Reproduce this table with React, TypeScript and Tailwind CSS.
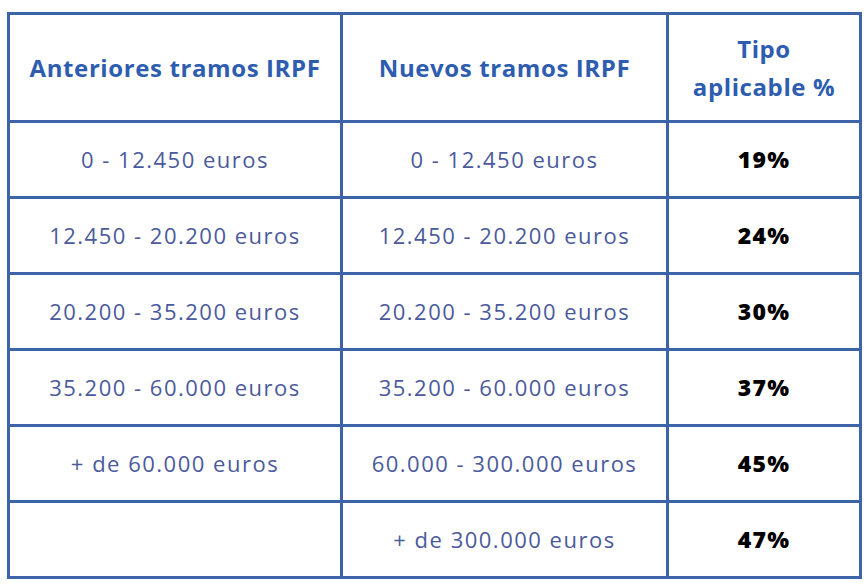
const rows = [
  { before: '0 - 12.450 euros', after: '0 - 12.450 euros', rate: '19%' },
  { before: '12.450 - 20.200 euros', after: '12.450 - 20.200 euros', rate: '24%' },
  { before: '20.200 - 35.200 euros', after: '20.200 - 35.200 euros', rate: '30%' },
  { before: '35.200 - 60.000 euros', after: '35.200 - 60.000 euros', rate: '37%' },
  { before: '+ de 60.000 euros', after: '60.000 - 300.000 euros', rate: '45%' },
  { before: '', after: '+ de 300.000 euros', rate: '47%' },
];

export default function App() {
  return (
    <div className="w-[866px] h-[584px] bg-white pt-[12px] pl-[7px] font-['Open_Sans',sans-serif]">
      <table className="border-collapse border-[3px] border-[#3d64a8] table-fixed">
        <colgroup>
          <col className="w-[333px]" />
          <col className="w-[326px]" />
          <col className="w-[193px]" />
        </colgroup>
        <thead>
          <tr className="h-[108px]">
            <th className="border-[3px] border-[#3d64a8] text-[24px] font-bold tracking-[0.6px] text-[#2e5db0] leading-[38px]">
              Anteriores tramos IRPF
            </th>
            <th className="border-[3px] border-[#3d64a8] text-[24px] font-bold tracking-[0.6px] text-[#2e5db0] leading-[38px]">
              Nuevos tramos IRPF
            </th>
            <th className="border-[3px] border-[#3d64a8] text-[24px] font-bold tracking-[0.6px] text-[#2e5db0] leading-[38px]">
              Tipo
              <br />
              aplicable %
            </th>
          </tr>
        </thead>
        <tbody>
          {rows.map((row) => (
            <tr key={row.rate} className="h-[76px]">
              <td className="border-[3px] border-[#3d64a8] text-center text-[22px] tracking-[1.5px] text-[#4b5a9c]">
                {row.before}
              </td>
              <td className="border-[3px] border-[#3d64a8] text-center text-[22px] tracking-[1.5px] text-[#4b5a9c]">
                {row.after}
              </td>
              <td className="border-[3px] border-[#3d64a8] text-center text-[23px] font-extrabold tracking-[1.2px] text-black">
                {row.rate}
              </td>
            </tr>
          ))}
        </tbody>
      </table>
    </div>
  );
}
